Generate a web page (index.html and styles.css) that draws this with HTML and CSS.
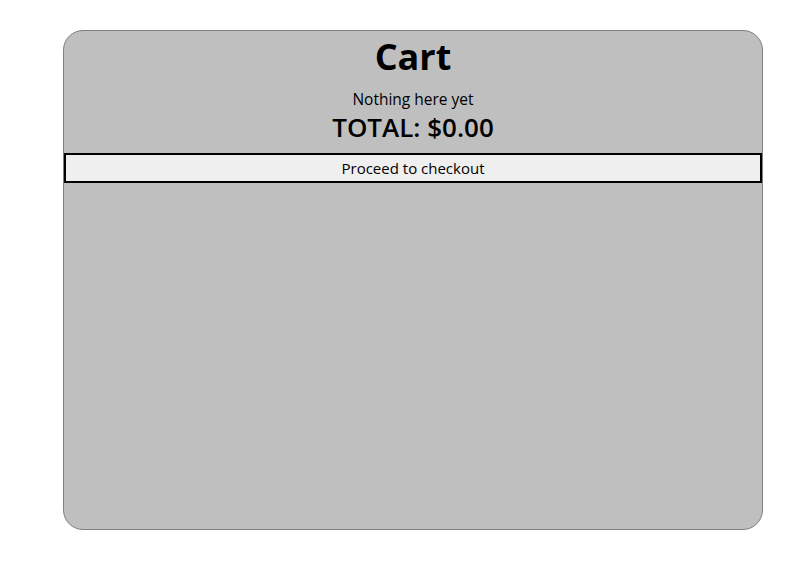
FILE: index.html
```html
<!DOCTYPE html>
<html>
<head>
<meta charset="utf-8">
<link rel="stylesheet" href="styles.css">
</head>
<body>
<div class="cart">
  <h1 class="cart-title">Cart</h1>
  <p class="cart-empty">Nothing here yet</p>
  <h2 class="cart-total">TOTAL: $0.00</h2>
  <button class="checkout">Proceed to checkout</button>
</div>
</body>
</html>
```
FILE: styles.css
```css
html, body {
  margin: 0;
  padding: 0;
  background: #ffffff;
}
body {
  font-family: "Open Sans", "Noto Sans", sans-serif;
  color: #000;
}
.cart {
  box-sizing: border-box;
  width: 700px;
  height: 500px;
  margin: 30px 0 0 63px;
  background: #bfbfbf;
  border: 1px solid #808080;
  border-radius: 20px;
  display: flex;
  flex-direction: column;
  align-items: center;
}
.cart-title {
  margin: 3px 0 0;
  font-size: 36px;
  line-height: 46px;
  font-weight: 700;
}
.cart-empty {
  margin: 8px 0 0;
  font-size: 15.5px;
  line-height: 22px;
}
.cart-total {
  margin: 2px 0 0;
  font-size: 26px;
  line-height: 31px;
  font-weight: 600;
}
.checkout {
  box-sizing: border-box;
  margin-top: 10px;
  width: 100%;
  height: 30px;
  background: #efefef;
  border: 2px solid #000;
  font-family: inherit;
  font-size: 15px;
  color: #000;
  padding: 0;
}
```
